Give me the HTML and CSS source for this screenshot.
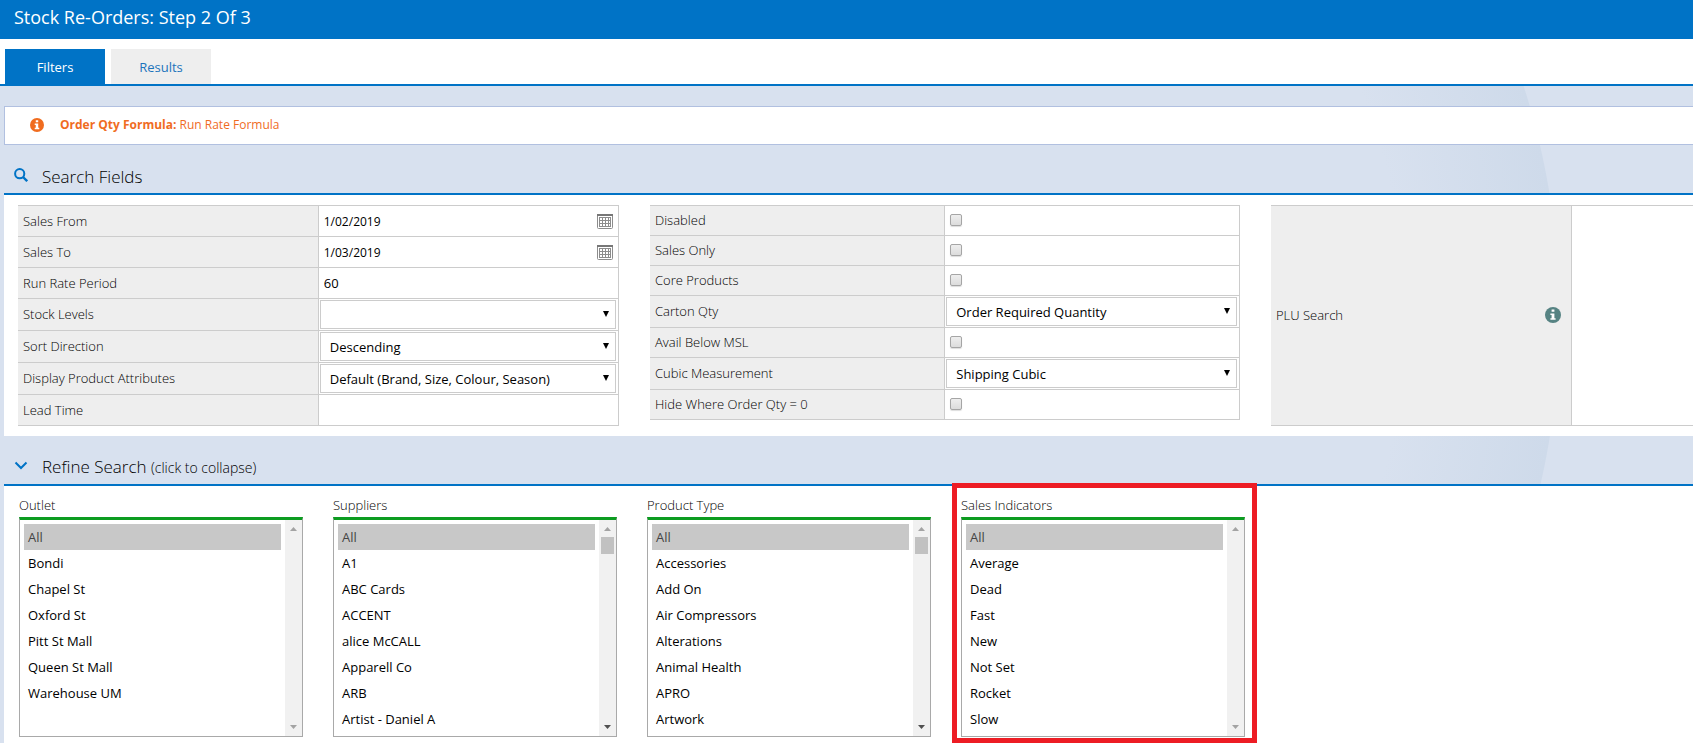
FILE: index.html
```html
<!DOCTYPE html>
<html lang="en">
<head>
    <meta charset="UTF-8">
    <meta name="viewport" content="width=device-width, initial-scale=1.0">
    <title>Stock Re-Orders</title>
    <link rel="stylesheet" href="styles.css">
</head>
<body>
    <!-- shared icons -->
    <svg class="sprite" aria-hidden="true">
        <symbol id="icon-info" viewBox="0 0 16 16">
            <circle cx="8" cy="8" r="8" fill="currentColor"/>
            <path d="M6.6 2.6h2.8v2.2H6.6zM5.4 6.4h4v4.8h1.2v1.6H5.4v-1.6h1.2V8H5.4z" fill="#fff"/>
        </symbol>
        <symbol id="icon-calendar" viewBox="0 0 16 15">
            <rect x="0.5" y="0.5" width="15" height="14" rx="1" fill="#fff" stroke="#8c8c8c"/>
            <path d="M0 0h16v2H0z" fill="#777"/>
            <path d="M2 3.5h12M2 6.5h12M2 9.5h12M2 12.5h12M2.5 3v10M5.5 3v10M8.5 3v10M11.5 3v10M13.5 3v10" stroke="#8c8c8c" fill="none"/>
        </symbol>
        <symbol id="icon-up" viewBox="0 0 7 4">
            <path d="M0 4L3.5 0L7 4z" fill="currentColor"/>
        </symbol>
        <symbol id="icon-down" viewBox="0 0 7 4">
            <path d="M0 0h7L3.5 4z" fill="currentColor"/>
        </symbol>
    </svg>

    <header class="title-bar">
        <h1>Stock Re-Orders: Step 2 Of 3</h1>
    </header>

    <nav class="tabs">
        <a href="#filters" class="tab active">Filters</a>
        <a href="#results" class="tab">Results</a>
    </nav>

    <main class="content" id="filters">
        <div class="notice">
            <svg class="notice-icon"><use href="#icon-info"/></svg>
            <p><strong>Order Qty Formula:</strong> Run Rate Formula</p>
        </div>

        <div class="section-title">
            <svg class="section-icon" viewBox="0 0 14 14">
                <circle cx="5.7" cy="5.7" r="4.6" fill="none" stroke="currentColor" stroke-width="2"/>
                <path d="M9 9l4.2 4.2" stroke="currentColor" stroke-width="2.4"/>
            </svg>
            <h2>Search Fields</h2>
        </div>

        <section class="panel search-fields">
            <table class="fields">
                <tr>
                    <th><label for="salesFrom">Sales From</label></th>
                    <td><div class="date-field">
                        <input type="text" id="salesFrom" value="1/02/2019">
                        <button type="button" aria-label="Pick sales from date"><svg><use href="#icon-calendar"/></svg></button>
                    </div></td>
                </tr>
                <tr>
                    <th><label for="salesTo">Sales To</label></th>
                    <td><div class="date-field">
                        <input type="text" id="salesTo" value="1/03/2019">
                        <button type="button" aria-label="Pick sales to date"><svg><use href="#icon-calendar"/></svg></button>
                    </div></td>
                </tr>
                <tr>
                    <th><label for="runRate">Run Rate Period</label></th>
                    <td><input type="text" id="runRate" value="60"></td>
                </tr>
                <tr>
                    <th><label for="stockLevels">Stock Levels</label></th>
                    <td><select id="stockLevels" class="drop"><option></option></select></td>
                </tr>
                <tr>
                    <th><label for="sortDirection">Sort Direction</label></th>
                    <td><select id="sortDirection" class="drop"><option>Descending</option></select></td>
                </tr>
                <tr>
                    <th><label for="attributes">Display Product Attributes</label></th>
                    <td><select id="attributes" class="drop"><option>Default (Brand, Size, Colour, Season)</option></select></td>
                </tr>
                <tr>
                    <th><label for="leadTime">Lead Time</label></th>
                    <td><input type="text" id="leadTime"></td>
                </tr>
            </table>

            <table class="fields compact">
                <tr>
                    <th><label for="disabled">Disabled</label></th>
                    <td><input type="checkbox" id="disabled"></td>
                </tr>
                <tr>
                    <th><label for="salesOnly">Sales Only</label></th>
                    <td><input type="checkbox" id="salesOnly"></td>
                </tr>
                <tr>
                    <th><label for="coreProducts">Core Products</label></th>
                    <td><input type="checkbox" id="coreProducts"></td>
                </tr>
                <tr>
                    <th><label for="cartonQty">Carton Qty</label></th>
                    <td><select id="cartonQty" class="drop"><option>Order Required Quantity</option></select></td>
                </tr>
                <tr>
                    <th><label for="belowMsl">Avail Below MSL</label></th>
                    <td><input type="checkbox" id="belowMsl"></td>
                </tr>
                <tr>
                    <th><label for="cubic">Cubic Measurement</label></th>
                    <td><select id="cubic" class="drop"><option>Shipping Cubic</option></select></td>
                </tr>
                <tr>
                    <th><label for="hideZero">Hide Where Order Qty = 0</label></th>
                    <td><input type="checkbox" id="hideZero"></td>
                </tr>
            </table>

            <div class="plu">
                <div class="plu-label">
                    <label for="plu">PLU Search</label>
                    <svg class="plu-icon"><use href="#icon-info"/></svg>
                </div>
                <textarea id="plu"></textarea>
            </div>
        </section>

        <div class="section-title">
            <svg class="section-icon" viewBox="0 0 14 14">
                <path d="M1.5 3.5L7 9l5.500-5.500" fill="none" stroke="currentColor" stroke-width="2"/>
            </svg>
            <h2>Refine Search <small>(click to collapse)</small></h2>
        </div>

        <section class="panel refine">
            <div class="filter">
                <label for="outlet">Outlet</label>
                <div class="list">
                    <select id="outlet" multiple size="8">
                        <option selected>All</option>
                        <option>Bondi</option>
                        <option>Chapel St</option>
                        <option>Oxford St</option>
                        <option>Pitt St Mall</option>
                        <option>Queen St Mall</option>
                        <option>Warehouse UM</option>
                    </select>
                    <div class="scrollbar">
                        <svg><use href="#icon-up"/></svg>
                        <svg class="last"><use href="#icon-down"/></svg>
                    </div>
                </div>
            </div>

            <div class="filter">
                <label for="suppliers">Suppliers</label>
                <div class="list">
                    <select id="suppliers" multiple size="8">
                        <option selected>All</option>
                        <option>A1</option>
                        <option>ABC Cards</option>
                        <option>ACCENT</option>
                        <option>alice McCALL</option>
                        <option>Apparell Co</option>
                        <option>ARB</option>
                        <option>Artist - Daniel A</option>
                    </select>
                    <div class="scrollbar">
                        <svg><use href="#icon-up"/></svg>
                        <span class="thumb"></span>
                        <svg class="last enabled"><use href="#icon-down"/></svg>
                    </div>
                </div>
            </div>

            <div class="filter">
                <label for="productType">Product Type</label>
                <div class="list">
                    <select id="productType" multiple size="8">
                        <option selected>All</option>
                        <option>Accessories</option>
                        <option>Add On</option>
                        <option>Air Compressors</option>
                        <option>Alterations</option>
                        <option>Animal Health</option>
                        <option>APRO</option>
                        <option>Artwork</option>
                    </select>
                    <div class="scrollbar">
                        <svg><use href="#icon-up"/></svg>
                        <span class="thumb"></span>
                        <svg class="last enabled"><use href="#icon-down"/></svg>
                    </div>
                </div>
            </div>

            <div class="filter highlight">
                <label for="indicators">Sales Indicators</label>
                <div class="list">
                    <select id="indicators" multiple size="8">
                        <option selected>All</option>
                        <option>Average</option>
                        <option>Dead</option>
                        <option>Fast</option>
                        <option>New</option>
                        <option>Not Set</option>
                        <option>Rocket</option>
                        <option>Slow</option>
                    </select>
                    <div class="scrollbar">
                        <svg><use href="#icon-up"/></svg>
                        <svg class="last"><use href="#icon-down"/></svg>
                    </div>
                </div>
            </div>
        </section>
    </main>
</body>
</html>
```

FILE: styles.css
```css
* {
    box-sizing: border-box;
}

body {
    margin: 0;
    min-height: 100vh;
    display: flex;
    flex-direction: column;
    font-family: "Open Sans", sans-serif;
    font-size: 13px;
    line-height: 18px;
    color: #222;
    background:
        linear-gradient(90deg, #d8e1ef 1200px, transparent 1200px),
        radial-gradient(circle at 804px 316px, transparent 600px, #cedaea 755px, transparent 756px),
        #d8e1ef;
}

h1, h2, p {
    margin: 0;
    font-weight: normal;
}

input, select, textarea, button {
    font: inherit;
    color: #000;
    margin: 0;
    border: none;
    background: none;
}

label {
    font-weight: 300;
    color: #000;
}

.sprite {
    display: none;
}

.title-bar {
    background: #0073c6;
    color: #fff;
    padding: 5px 14px 10px;
}

h1 {
    font-size: 18px;
    line-height: 24px;
}

.tabs {
    display: flex;
    gap: 6px;
    padding: 10px 5px 0;
    background: #fff;
    border-bottom: 2px solid #0073c6;
}

.tab {
    width: 100px;
    height: 35px;
    line-height: 36px;
    text-align: center;
    text-decoration: none;
    color: #1c74bc;
    background: #eee;
}

.tab.active {
    background: #0073c6;
    color: #fff;
}

.content {
    flex: 1;
    display: flex;
    flex-direction: column;
    padding: 20px 0 0 4px;
}

.notice {
    display: flex;
    align-items: center;
    gap: 16px;
    height: 39px;
    padding: 0 0 2px 25px;
    background: #fff;
    border: 1px solid #b1c0e0;
    border-right: none;
    font-size: 12px;
    color: #f06c1f;
}

.notice-icon {
    width: 14px;
    height: 14px;
}

.section-title {
    display: flex;
    align-items: center;
    gap: 14px;
    height: 50px;
    padding: 12px 0 0 10px;
    border-bottom: 2px solid #0073c6;
}

.section-icon {
    width: 14px;
    height: 14px;
    color: #0073c6;
}

h2 {
    padding-top: 3px;
    font-size: 17px;
    font-weight: 300;
    line-height: 24px;
    color: #000;
}

h2 small {
    font-size: 14px;
}

.panel {
    background: #fff;
}

.search-fields {
    display: grid;
    grid-template-columns: minmax(0, 601fr) minmax(0, 590fr) minmax(0, 422fr);
    gap: 31px;
    align-items: start;
    padding: 10px 0 10px 14px;
}

.fields {
    width: 100%;
    border-collapse: collapse;
    table-layout: fixed;
}

.fields th,
.fields td {
    height: 31px;
    padding: 0;
    border: 1px solid #ccc;
}

.fields.compact th,
.fields.compact td {
    height: 30px;
}

.fields th {
    padding: 0 0 1px 5px;
    text-align: left;
    font-weight: normal;
    background: #eee;
    border-left: none;
}

.fields input[type="text"] {
    display: block;
    width: 100%;
    height: 30px;
    padding: 0 5px;
}

.fields input[type="checkbox"] {
    appearance: none;
    display: block;
    width: 12px;
    height: 12px;
    margin: 0 0 1px 5px;
    border: 1px solid #a5a5a5;
    border-radius: 2px;
    background: linear-gradient(#eee, #dcdcdc);
    box-shadow: 0 1px 1px #ddd;
}

.date-field {
    display: flex;
    align-items: center;
    padding-right: 5px;
    font-size: 12px;
}

.date-field button {
    padding: 0;
    cursor: pointer;
}

.date-field svg {
    display: block;
    width: 16px;
    height: 15px;
}

.drop {
    appearance: none;
    display: block;
    width: calc(100% - 3px);
    height: 29px;
    margin: 1px 2px 1px 1px;
    padding: 1px 20px 0 9px;
    border: 1px solid #ccc;
    background: url("data:image/svg+xml,%3Csvg xmlns='http://www.w3.org/2000/svg' width='6' height='6'%3E%3Cpath d='M0 0h6L3 6z'/%3E%3C/svg%3E") no-repeat right 6px top 10px;
}

.plu {
    display: flex;
    align-self: stretch;
    border: 1px solid #ccc;
    border-width: 1px 0;
}

.plu-label {
    display: flex;
    align-items: center;
    justify-content: space-between;
    width: 301px;
    padding: 0 10px 2px 5px;
    background: #eee;
    border-right: 1px solid #ccc;
}

.plu-icon {
    width: 16px;
    height: 16px;
    color: #568383;
}

.plu textarea {
    flex: 1;
    min-width: 0;
    resize: none;
}

.refine {
    flex: 1;
    display: flex;
    gap: 30px;
    padding: 10px 15px 6px;
}

.filter {
    position: relative;
    width: 284px;
}

.filter label {
    display: block;
    height: 21px;
}

.list {
    display: flex;
    border: 1px solid #a9a9a9;
    border-top: 3px solid #0c9c20;
}

.list select {
    flex: 1;
    min-width: 0;
    height: 216px;
    padding: 4px;
    overflow: hidden;
    border-radius: 0;
}

.list option {
    height: 26px;
    padding: 4px;
    line-height: 18px;
}

.list option:checked {
    background: #c8c8c8;
    color: #444;
}

.scrollbar {
    display: flex;
    flex-direction: column;
    align-items: center;
    width: 17px;
    padding: 7px 0;
    background: #f1f1f1;
    color: #a3a3a3;
}

.scrollbar svg {
    width: 7px;
    height: 4px;
}

.scrollbar .last {
    margin-top: auto;
}

.scrollbar .enabled {
    color: #505050;
}

.thumb {
    width: 13px;
    height: 17px;
    margin-top: 6px;
    background: #c1c1c1;
}

/* red frame around the sales indicators */
.highlight::after {
    content: "";
    position: absolute;
    inset: -13px -12px -6px -9px;
    border: 5px solid #ed1c24;
    pointer-events: none;
}
```
